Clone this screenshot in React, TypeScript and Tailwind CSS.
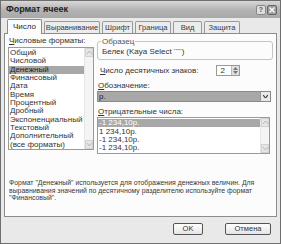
import React from "react";

const font = { fontFamily: '"Liberation Sans", Arial, sans-serif' };

function Tab({ label, active, w }: { label: string; active?: boolean; w: string }) {
  return (
    <div
      className={
        active
          ? `${w} h-[15px] -mb-px relative z-10 bg-[#fcfcfc] border border-[#8c8c8c] border-b-0 rounded-t-[2px] flex items-center justify-center text-[8px] text-[#2a2a2a]`
          : `${w} h-[12px] mt-[2px] bg-[#ececec] border border-[#9a9a9a] border-b-0 rounded-t-[2px] flex items-center justify-center text-[7.6px] text-[#3a3a3a]`
      }
    >
      {label}
    </div>
  );
}

function ScrollBar({ h }: { h: string }) {
  return (
    <div className={`w-[9px] ${h} bg-[#f4f4f4] flex flex-col justify-between border-l border-[#e6e6e6]`}>
      <div className="h-[9px] bg-[#e6e6e6] border border-[#d2d2d2] flex items-center justify-center">
        <svg width="5" height="3" viewBox="0 0 5 3"><path d="M0 3 L2.5 0 L5 3" fill="none" stroke="#aaa" strokeWidth="0.8" /></svg>
      </div>
      <div className="h-[9px] bg-[#e6e6e6] border border-[#d2d2d2] flex items-center justify-center">
        <svg width="5" height="3" viewBox="0 0 5 3"><path d="M0 0 L2.5 3 L5 0" fill="none" stroke="#aaa" strokeWidth="0.8" /></svg>
      </div>
    </div>
  );
}

export default function App() {
  const formats = [
    "Общий",
    "Числовой",
    "Денежный",
    "Финансовый",
    "Дата",
    "Время",
    "Процентный",
    "Дробный",
    "Экспоненциальный",
    "Текстовый",
    "Дополнительный",
    "(все форматы)",
  ];
  const neg = ["-1 234,10р.", "1 234,10р.", "-1 234,10р.", "-1 234,10р."];
  return (
    <div style={font} className="w-[281px] h-[244px] bg-[#e9e9e9] border border-[#6e6e6e] flex flex-col overflow-hidden text-[#333]">
      {/* title bar */}
      <div className="h-[17px] bg-gradient-to-b from-[#d8d8d8] via-[#b4b4b4] to-[#a8a8a8] flex items-center pl-[5px] pr-[3px] shrink-0">
        <span className="text-[9px] font-bold text-[#1e1e1e] leading-none">Формат ячеек</span>
        <div className="ml-auto flex gap-[1px]">
          <div className="w-[10px] h-[10px] rounded-[2px] bg-[#dedede] border border-[#888] flex items-center justify-center text-[7px] font-bold text-[#555] leading-none">?</div>
          <div className="w-[10px] h-[10px] rounded-[2px] bg-[#9e9e9e] border border-[#666] flex items-center justify-center">
            <svg width="6" height="6" viewBox="0 0 6 6"><path d="M0.5 0.5 L5.5 5.5 M5.5 0.5 L0.5 5.5" stroke="#fff" strokeWidth="1.3" /></svg>
          </div>
        </div>
      </div>
      {/* tabs */}
      <div className="flex items-end gap-[2px] pl-[6px] mt-[1px] h-[14px] shrink-0">
        <Tab label="Число" active w="w-[35px]" />
        <Tab label="Выравнивание" w="w-[56px]" />
        <Tab label="Шрифт" w="w-[31px]" />
        <Tab label="Граница" w="w-[36px]" />
        <Tab label="Вид" w="w-[29px]" />
        <Tab label="Защита" w="w-[36px]" />
      </div>
      {/* panel */}
      <div className="mx-[3px] h-[184px] bg-[#fcfcfc] border border-[#8c8c8c] flex flex-col text-[8px] leading-none shrink-0">
        <div className="flex pt-[3px] pl-[3px] pr-[3px]">
          {/* left */}
          <div className="w-[86px] flex flex-col">
            <div className="h-[9px] pl-[1px]"><span className="underline">Ч</span>исловые форматы:</div>
            <div className="mt-[1px] h-[103px] border border-[#9a9a9a] bg-white flex">
              <div className="flex-1 flex flex-col pt-[1px]">
                {formats.map((f) =>
                  <div key={f} className={f === "Денежный" ? "h-[8.4px] bg-[#a8a8a8] text-[#222] pl-[1px] flex items-center" : "h-[8.4px] pl-[1px] flex items-center"}>{f}</div>
                )}
              </div>
              <ScrollBar h="h-[101px]" />
            </div>
          </div>
          {/* right */}
          <div className="flex-1 ml-[3px] flex flex-col">
            <div className="mt-[4px] h-[19px] border border-[#c4c4c4] rounded-[3px] relative pl-[4px] flex items-center">
              <span className="absolute -top-[4px] left-[3px] bg-[#fcfcfc] px-[1px] text-[#555]">Образец</span>
              <span className="mt-[2px]">Белек (Kaya Select <sup className="text-[4px]">*****</sup>)</span>
            </div>
            <div className="mt-[5px] h-[11px] flex items-center pl-[3px]">
              <span><span className="underline">Ч</span>исло десятичных знаков:</span>
              <div className="ml-[18px] w-[24px] h-[11px] border border-[#9a9a9a] bg-white flex items-center">
                <span className="pl-[3px] flex-1">2</span>
                <div className="w-[8px] h-full bg-[#e0e0e0] border-l border-[#bbb] flex flex-col items-center justify-center gap-[1px]">
                  <svg width="5" height="3" viewBox="0 0 5 3"><path d="M0 3 L2.5 0 L5 3Z" fill="#777" /></svg>
                  <svg width="5" height="3" viewBox="0 0 5 3"><path d="M0 0 L2.5 3 L5 0Z" fill="#777" /></svg>
                </div>
              </div>
            </div>
            <div className="mt-[6px] h-[8px] pl-[1px]"><span className="underline">О</span>бозначение:</div>
            <div className="mt-[1px] h-[11px] border border-[#8a8a8a] bg-[#a8a8a8] flex items-center mr-[2px]">
              <span className="flex-1 pl-[1px] text-[#222]">р.</span>
              <div className="w-[10px] h-[9px] bg-[#e8e8e8] border-l border-[#999] flex items-center justify-center">
                <svg width="5" height="3" viewBox="0 0 5 3"><path d="M0 0 L2.5 3 L5 0" fill="none" stroke="#333" strokeWidth="1.1" /></svg>
              </div>
            </div>
            <div className="mt-[6px] h-[8px] pl-[1px]"><span className="underline">О</span>трицательные числа:</div>
            <div className="mt-[1px] h-[37px] border border-[#9a9a9a] bg-white flex mr-[3px]">
              <div className="flex-1 flex flex-col pt-[1px]">
                {neg.map((n, i) =>
                  <div key={i} className={i === 0 ? "h-[8.4px] bg-[#a8a8a8] text-white pl-[1px] flex items-center" : "h-[8.4px] pl-[1px] flex items-center"}>{n}</div>
                )}
              </div>
              <ScrollBar h="h-[35px]" />
            </div>
          </div>
        </div>
        <div className="mt-auto mb-[14px] px-[4px] text-[6.9px] leading-[7.7px] text-[#383838] whitespace-nowrap">
          Формат "Денежный" используется для отображения денежных величин. Для<br />
          выравнивания значений по десятичному разделителю используйте формат<br />
          "Финансовый".
        </div>
      </div>
      {/* buttons */}
      <div className="flex justify-end gap-[22px] pr-[9px] mt-[6px]">
        <div className="w-[30px] h-[12px] bg-gradient-to-b from-[#ffffff] to-[#e4e4e4] border border-[#555] rounded-[2px] flex items-center justify-center text-[7.5px]">OK</div>
        <div className="w-[46px] h-[12px] bg-gradient-to-b from-[#ffffff] to-[#e4e4e4] border border-[#555] rounded-[2px] flex items-center justify-center text-[7.5px]">Отмена</div>
      </div>
    </div>
  );
}
